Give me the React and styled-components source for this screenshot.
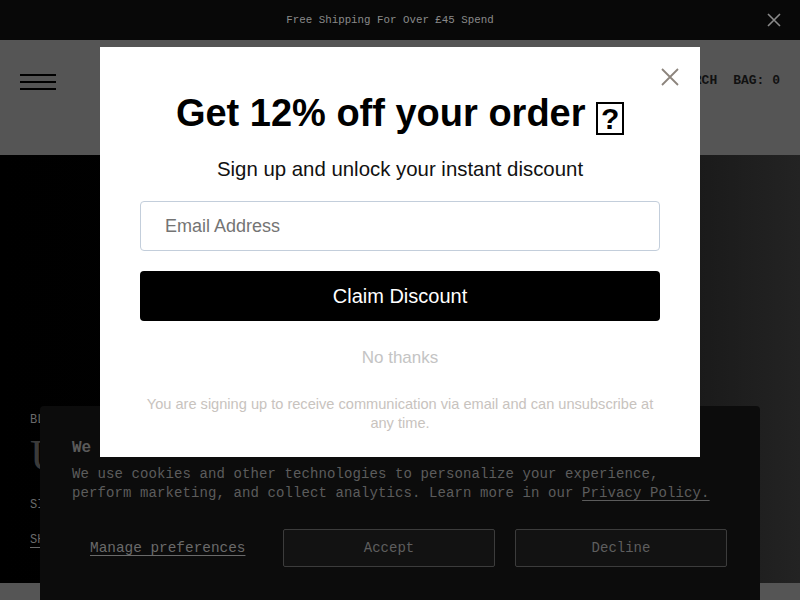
import React from 'react';
import styled, { createGlobalStyle } from 'styled-components';

const GlobalStyle = createGlobalStyle`
  html, body {
    margin: 0;
    padding: 0;
    background: #000;
  }
  * {
    box-sizing: border-box;
  }
`;

const App = () => {
  return (
    <Page>
      <GlobalStyle />
      <AnnounceBar>
        <AnnounceText>Free Shipping For Over £45 Spend</AnnounceText>
        <AnnounceClose aria-label="Close">
          <svg width="16" height="16" viewBox="0 0 16 16">
            <path d="M2 2 L14 14 M14 2 L2 14" stroke="#8a8a8a" strokeWidth="1.6" fill="none" />
          </svg>
        </AnnounceClose>
      </AnnounceBar>

      <Header>
        <Burger aria-label="Menu">
          <BurgerLine />
          <BurgerLine />
          <BurgerLine />
        </Burger>
        <HeaderNav>
          <NavItem>SEARCH</NavItem>
          <NavItem>BAG: 0</NavItem>
        </HeaderNav>
      </Header>

      <Hero>
        <HeroKicker>BLACK FRIDAY</HeroKicker>
        <HeroTitle>UP TO 50% OFF</HeroTitle>
        <HeroKicker>SITEWIDE FOR A LIMITED TIME</HeroKicker>
        <HeroLink>SHOP NOW</HeroLink>
      </Hero>
      <NextSection />

      <CookieBanner>
        <CookieTitle>We value your privacy</CookieTitle>
        <CookieText>
          We use cookies and other technologies to personalize your experience,<br />
          perform marketing, and collect analytics. Learn more in our <CookieLink>Privacy Policy.</CookieLink>
        </CookieText>
        <CookieActions>
          <ManageLink>Manage preferences</ManageLink>
          <CookieButton>Accept</CookieButton>
          <CookieButton>Decline</CookieButton>
        </CookieActions>
      </CookieBanner>

      <Modal>
        <ModalClose aria-label="Close">
          <svg width="20" height="20" viewBox="0 0 20 20">
            <path d="M2 2 L18 18 M18 2 L2 18" stroke="#8c847c" strokeWidth="1.8" fill="none" />
          </svg>
        </ModalClose>
        <ModalTitle>
          Get 12% off your order <Tofu>?</Tofu>
        </ModalTitle>
        <ModalSubtitle>Sign up and unlock your instant discount</ModalSubtitle>
        <EmailInput placeholder="Email Address" />
        <ClaimButton>Claim Discount</ClaimButton>
        <NoThanks>No thanks</NoThanks>
        <Disclaimer>
          You are signing up to receive communication via email and can unsubscribe at any time.
        </Disclaimer>
      </Modal>
    </Page>
  );
};

const Page = styled.div`
  width: 800px;
  height: 600px;
  overflow: hidden;
  background: #000;
`;

const AnnounceBar = styled.div`
  height: 40px;
  background: #080808;
  display: flex;
  align-items: center;
  justify-content: center;
  padding-right: 20px;
  position: relative;
`;

const AnnounceText = styled.span`
  font-family: "Liberation Mono", monospace;
  font-size: 10.8px;
  color: #8a8a8a;
`;

const AnnounceClose = styled.div`
  position: absolute;
  right: 18px;
  top: 12px;
  width: 16px;
  height: 16px;
  display: flex;
`;

const Header = styled.header`
  height: 115px;
  background: #555555;
  display: flex;
  justify-content: space-between;
  padding: 33px 20px 0 20px;
`;

const Burger = styled.div`
  display: flex;
  flex-direction: column;
  gap: 5px;
  padding-top: 1px;
`;

const BurgerLine = styled.span`
  display: block;
  width: 36px;
  height: 2px;
  background: #000;
`;

const HeaderNav = styled.nav`
  display: flex;
  gap: 16px;
`;

const NavItem = styled.span`
  font-family: "Liberation Mono", monospace;
  font-size: 13px;
  font-weight: bold;
  color: #111;
  line-height: 16px;
`;

const Hero = styled.section`
  height: 428px;
  background: linear-gradient(90deg, #000 0%, #020202 45%, #151515 80%, #232323 100%);
  display: flex;
  flex-direction: column;
  justify-content: flex-end;
  padding: 0 0 36px 30px;
  font-family: "Liberation Mono", monospace;
`;

const HeroKicker = styled.div`
  font-size: 12px;
  line-height: 14px;
  color: #6a6a6a;
`;

const HeroTitle = styled.div`
  font-family: "Liberation Serif", serif;
  font-size: 44px;
  color: #3a3a3a;
  line-height: 44px;
  margin: 7px 0 20px 0;
`;

const HeroLink = styled.div`
  font-size: 12px;
  line-height: 14px;
  color: #6a6a6a;
  text-decoration: underline;
  text-underline-offset: 4px;
  margin-top: 21px;
`;

const NextSection = styled.div`
  height: 17px;
  background: #555555;
`;

const CookieBanner = styled.div`
  position: fixed;
  left: 40px;
  top: 406px;
  width: 720px;
  height: 220px;
  background: #0c0c0c;
  border-radius: 4px 4px 0 0;
  padding: 32px 32px 0 32px;
  font-family: "Liberation Mono", monospace;
  color: #5c5c5c;
`;

const CookieTitle = styled.div`
  font-size: 16px;
  font-weight: bold;
  color: #5a5a5a;
  line-height: 20px;
  margin-bottom: 7px;
`;

const CookieText = styled.p`
  margin: 0;
  font-size: 14px;
  letter-spacing: 0.1px;
  line-height: 19px;
  white-space: nowrap;
`;

const CookieLink = styled.span`
  text-decoration: underline;
  text-underline-offset: 3px;
`;

const CookieActions = styled.div`
  display: grid;
  grid-template-columns: 1fr 212px 212px;
  gap: 20px;
  align-items: center;
  margin-top: 26px;
  margin-right: 1px;
`;

const ManageLink = styled.span`
  font-size: 14.4px;
  padding-left: 18px;
  text-decoration: underline;
  text-underline-offset: 3px;
  color: #6a6a6a;
`;

const CookieButton = styled.button`
  height: 38px;
  background: #121212;
  border: 1px solid #3c3c3c;
  border-radius: 2px;
  font-family: "Liberation Mono", monospace;
  font-size: 14px;
  color: #5e5e5e;
`;

const Modal = styled.div`
  position: fixed;
  left: 100px;
  top: 47px;
  width: 600px;
  height: 410px;
  background: #fff;
  padding: 44px 40px 0 40px;
  font-family: "Liberation Sans", Arial, sans-serif;
  text-align: center;
  display: flex;
  flex-direction: column;
  align-items: stretch;
`;

const ModalClose = styled.div`
  position: absolute;
  right: 20px;
  top: 20px;
  width: 20px;
  height: 20px;
  display: flex;
`;

const ModalTitle = styled.h2`
  margin: 0;
  font-size: 38px;
  line-height: 44px;
  font-weight: bold;
  color: #000;
`;

const Tofu = styled.span`
  display: inline-block;
  width: 28px;
  height: 33px;
  border: 2px solid #000;
  font-size: 30px;
  line-height: 29px;
  text-align: center;
  vertical-align: -3px;
`;

const ModalSubtitle = styled.p`
  margin: 22px 0 0 0;
  font-size: 20.4px;
  line-height: 24px;
  color: #111;
`;

const EmailInput = styled.input`
  margin-top: 20px;
  height: 50px;
  border: 1px solid #c3cedb;
  border-radius: 4px;
  padding: 0 24px;
  font-family: "Liberation Sans", Arial, sans-serif;
  font-size: 18px;
  outline: none;

  &::placeholder {
    color: #747474;
  }
`;

const ClaimButton = styled.button`
  margin-top: 20px;
  height: 50px;
  background: #000;
  color: #fff;
  border: none;
  border-radius: 4px;
  font-family: "Liberation Sans", Arial, sans-serif;
  font-size: 20px;
`;

const NoThanks = styled.div`
  margin-top: 27px;
  font-size: 17px;
  line-height: 20px;
  color: #c4c4c4;
`;

const Disclaimer = styled.p`
  margin: 27px 0 0 0;
  font-size: 14.6px;
  line-height: 19px;
  color: #c8c3be;
`;

export default App;
